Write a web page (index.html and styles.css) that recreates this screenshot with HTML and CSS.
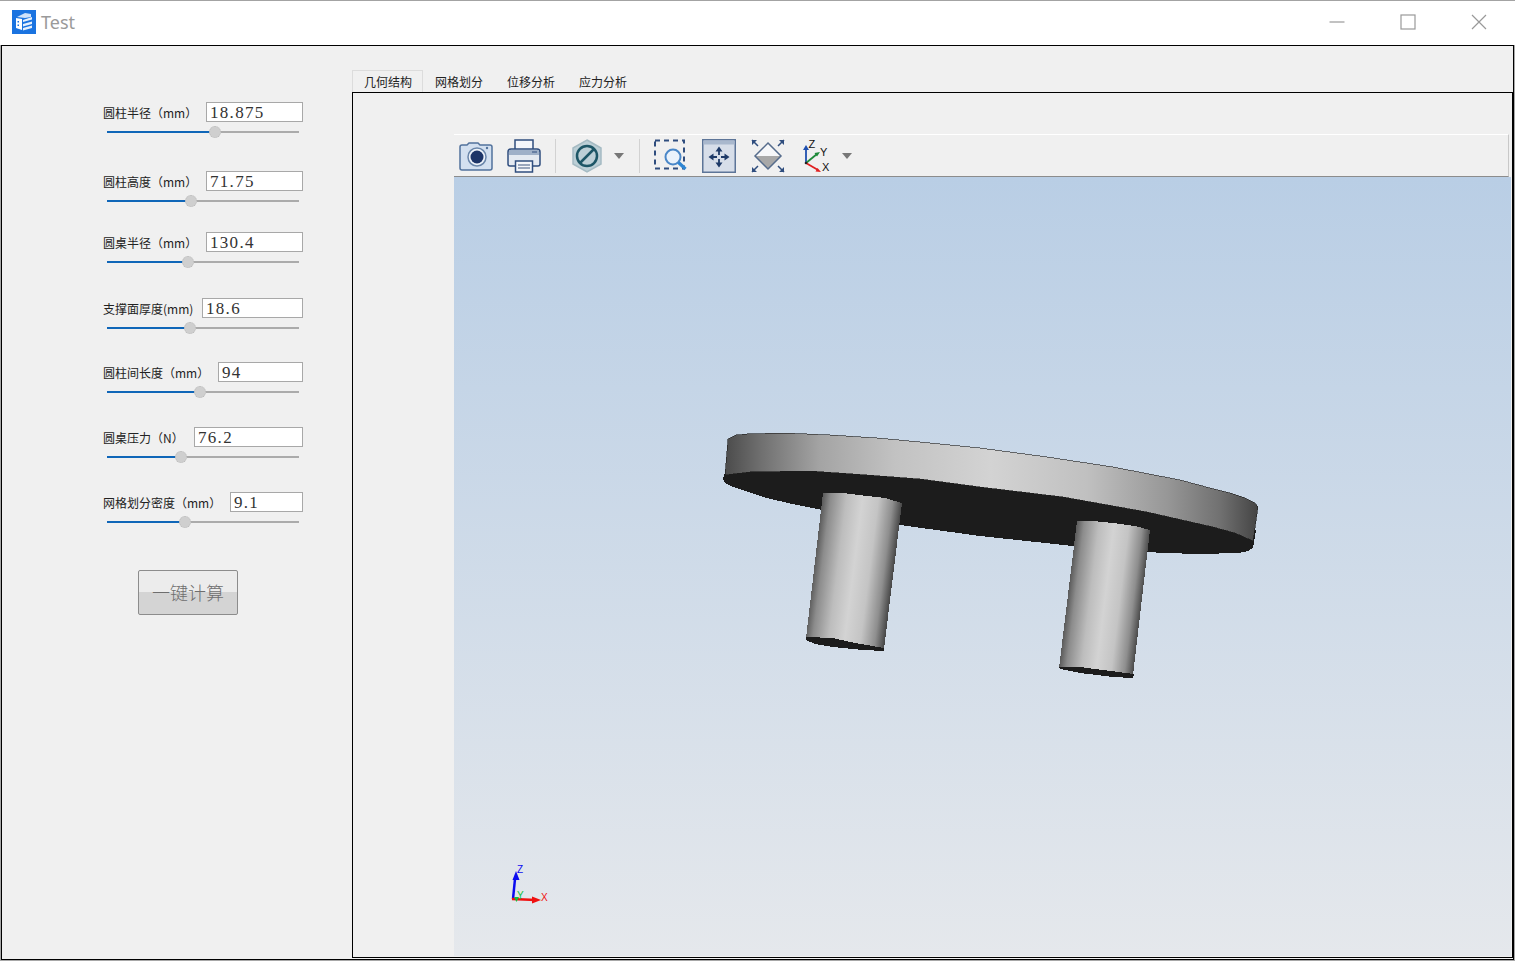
FILE: index.html
```html
<!DOCTYPE html>
<html lang="zh-CN">
<head>
<meta charset="utf-8">
<title>Test</title>
<link rel="stylesheet" href="styles.css">
</head>
<body>
<div class="app">
  <header class="titlebar">
    <svg class="app-icon" viewBox="0 0 24 24"><rect width="24" height="24" fill="#1a73e0"/><path d="M5 7l8-4 6 1v3l-6 1z" fill="#cfe2fa"/><path d="M4 8l6 1v11l-6-2z" fill="#fff"/><path d="M11 10l9-3v2.600l-9 2.400zM11 14l9-2.600v2.600l-9 2.400zM11 18l9-2.400v2.400l-9 2.400z" fill="#e6f0fc"/><path d="M5.500 11h1.500v1.500h-1.500zM5.500 14.500h1.500v1.500h-1.500z" fill="#1a73e0"/></svg>
    <span class="app-title">Test</span>
    <div class="win-controls">
      <svg class="win-btn" viewBox="0 0 16 16"><path d="M0.500 8h15" /></svg>
      <svg class="win-btn" viewBox="0 0 16 16"><rect x="1" y="1" width="14" height="14"/></svg>
      <svg class="win-btn" viewBox="0 0 16 16"><path d="M1 1l14 14M15 1L1 15"/></svg>
    </div>
  </header>

  <main class="window">
    <aside class="form">
      <section class="field">
        <div class="field-head"><label class="field-label">圆柱半径（mm）</label><div class="num w97">18.875</div></div>
        <div class="slider"><div class="slider-fill" style="width:56.300%"><span class="knob"></span></div></div>
      </section>
      <section class="field gap29">
        <div class="field-head"><label class="field-label">圆柱高度（mm）</label><div class="num w97">71.75</div></div>
        <div class="slider"><div class="slider-fill" style="width:43.700%"><span class="knob"></span></div></div>
      </section>
      <section class="field gap21">
        <div class="field-head"><label class="field-label">圆桌半径（mm）</label><div class="num w97">130.4</div></div>
        <div class="slider"><div class="slider-fill" style="width:42.200%"><span class="knob"></span></div></div>
      </section>
      <section class="field gap26">
        <div class="field-head"><label class="field-label">支撑面厚度(mm)</label><div class="num w101">18.6</div></div>
        <div class="slider"><div class="slider-fill" style="width:43.200%"><span class="knob"></span></div></div>
      </section>
      <section class="field gap24">
        <div class="field-head"><label class="field-label">圆柱间长度（mm）</label><div class="num w85">94</div></div>
        <div class="slider"><div class="slider-fill" style="width:48.400%"><span class="knob"></span></div></div>
      </section>
      <section class="field gap25">
        <div class="field-head"><label class="field-label">圆桌压力（N）</label><div class="num w109">76.2</div></div>
        <div class="slider"><div class="slider-fill" style="width:38.500%"><span class="knob"></span></div></div>
      </section>
      <section class="field gap25">
        <div class="field-head"><label class="field-label">网格划分密度（mm）</label><div class="num w73">9.1</div></div>
        <div class="slider"><div class="slider-fill" style="width:40.600%"><span class="knob"></span></div></div>
      </section>
      <button class="calc">一键计算</button>
    </aside>

    <section class="workspace">
      <nav class="tabs">
        <div class="tab active">几何结构</div>
        <div class="tab">网格划分</div>
        <div class="tab">位移分析</div>
        <div class="tab">应力分析</div>
      </nav>
      <div class="pane">
        <div class="toolbar">
          <svg class="tool" viewBox="0 0 34 34">
            <path d="M1 8q0-2 2-2h5l2-2h9l2 2h10q2 0 2 2v21q0 2-2 2H3q-2 0-2-2z" fill="#d3e0f0" stroke="#52729c" stroke-width="1.500"/>
            <circle cx="18" cy="18" r="9" fill="#eef3fa" stroke="#6a86aa" stroke-width="1.500"/>
            <circle cx="18" cy="18" r="6.500" fill="#1d3568"/>
            <circle cx="28" cy="9" r="1.200" fill="#52729c"/>
          </svg>
          <svg class="tool" viewBox="0 0 34 34">
            <rect x="8" y="1" width="18" height="11" fill="#f4f6fa" stroke="#2f4d7e" stroke-width="1.500"/>
            <path d="M1 13q0-3 3-3h26q3 0 3 3v12q0 2-2 2H3q-2 0-2-2z" fill="#e4e9f1" stroke="#2f4d7e" stroke-width="1.500"/>
            <path d="M2 11h30v5H2z" fill="#9fb0c8"/>
            <path d="M25 13h5" stroke="#2f4d7e"/>
            <rect x="8.500" y="22" width="17" height="11" fill="#f4f6fa" stroke="#2f4d7e" stroke-width="1.500"/>
            <path d="M11 26h12M11 29h12" stroke="#7b8ca8" stroke-width="1.500"/>
          </svg>
          <span class="sep"></span>
          <svg class="tool" viewBox="0 0 34 34">
            <path d="M17 1l14 8v16l-14 8-14-8V9z" fill="#bccfd6" stroke="#a5bbc3" stroke-width="1.500"/>
            <circle cx="17" cy="17" r="10" fill="none" stroke="#1d5666" stroke-width="2.500"/>
            <path d="M10 24L24 10" stroke="#1d5666" stroke-width="2.500"/>
          </svg>
          <span class="caret near"></span>
          <span class="sep after-caret"></span>
          <svg class="tool" viewBox="0 0 34 34">
            <rect x="1" y="1.500" width="29" height="28" fill="none" stroke="#2f4d7e" stroke-width="2" stroke-dasharray="5 4"/>
            <circle cx="19" cy="18" r="7.500" fill="#eaf2fb" stroke="#4a87c8" stroke-width="2"/>
            <path d="M24.500 23.500l7 6.500" stroke="#2f86d3" stroke-width="3.200"/>
          </svg>
          <svg class="tool" viewBox="0 0 34 34">
            <rect x="0.750" y="0.750" width="32.500" height="32.500" fill="#d7dee9" stroke="#5d7598" stroke-width="1.500"/>
            <rect x="1.500" y="1.500" width="31" height="4" fill="#a9b8cd"/>
            <path d="M17 12v4M17 20v4M11 18h4M19 18h4" stroke="#1e3a68" stroke-width="1.800"/>
            <path d="M17 7.500l-3.500 5h7zM17 28.500l-3.500-5h7zM6.500 18l5-3.500v7zM27.500 18l-5-3.500v7z" fill="#1e3a68"/>
          </svg>
          <svg class="tool shift" viewBox="0 0 34 34">
            <path d="M17 4l13 13H4z" fill="#f6f7f9"/>
            <path d="M4 17h26L17 30z" fill="#a8a8a8"/>
            <path d="M17 4l13 13-13 13L4 17z" fill="none" stroke="#566c8c" stroke-width="1.500"/>
            <path d="M1 1l6 6M33 1l-6 6M1 33l6-6M33 33l-6-6" stroke="#2f4d7e" stroke-width="1.500"/>
            <path d="M1 1h5L1 6zM33 1h-5l5 5zM1 33h5l-5-5zM33 33h-5l5-5z" fill="#2f4d7e"/>
          </svg>
          <svg class="tool" viewBox="0 0 34 34">
            <path d="M7 24V9" stroke="#1f4fae" stroke-width="1.800"/><path d="M7 6l-3 5h6z" fill="#1f4fae"/>
            <path d="M7 24l11-9" stroke="#1f8a3a" stroke-width="1.800"/><path d="M21 13l-5.500 1 2.500 3.500z" fill="#1f8a3a"/>
            <path d="M7 24l12 7" stroke="#e02020" stroke-width="1.800"/><path d="M22 33l-5.500-0.500 2-3.500z" fill="#e02020"/>
            <circle cx="7" cy="24" r="1.300" fill="#222"/>
            <text x="9.500" y="9" class="axis-label">Z</text>
            <text x="21" y="17" class="axis-label">Y</text>
            <text x="23" y="32" class="axis-label">X</text>
          </svg>
          <span class="caret"></span>
        </div>
        <div class="viewer">
          <svg class="scene" viewBox="454 177 1057 779">
            <defs>
              <linearGradient id="rim" gradientUnits="userSpaceOnUse" x1="724" y1="0" x2="1258" y2="0">
                <stop offset="0" stop-color="#4a4a4a"/>
                <stop offset="0.070" stop-color="#707070"/>
                <stop offset="0.180" stop-color="#a4a4a4"/>
                <stop offset="0.320" stop-color="#c2c2c2"/>
                <stop offset="0.500" stop-color="#d3d3d3"/>
                <stop offset="0.680" stop-color="#c0c0c0"/>
                <stop offset="0.830" stop-color="#979797"/>
                <stop offset="0.930" stop-color="#707070"/>
                <stop offset="1" stop-color="#444"/>
              </linearGradient>
              <linearGradient id="cyl1" gradientUnits="userSpaceOnUse" x1="814" y1="565" x2="893" y2="575">
                <stop offset="0" stop-color="#5a5a5a"/>
                <stop offset="0.100" stop-color="#8c8c8c"/>
                <stop offset="0.300" stop-color="#bdbdbd"/>
                <stop offset="0.500" stop-color="#d3d3d3"/>
                <stop offset="0.700" stop-color="#c4c4c4"/>
                <stop offset="0.880" stop-color="#8e8e8e"/>
                <stop offset="1" stop-color="#484848"/>
              </linearGradient>
              <linearGradient id="cyl2" gradientUnits="userSpaceOnUse" x1="1068" y1="594" x2="1142" y2="603">
                <stop offset="0" stop-color="#5a5a5a"/>
                <stop offset="0.100" stop-color="#8c8c8c"/>
                <stop offset="0.300" stop-color="#bdbdbd"/>
                <stop offset="0.500" stop-color="#d3d3d3"/>
                <stop offset="0.700" stop-color="#c4c4c4"/>
                <stop offset="0.880" stop-color="#8e8e8e"/>
                <stop offset="1" stop-color="#484848"/>
              </linearGradient>
            </defs>
            <polygon class="dark" points="725,472 723,479 725,483 733,487 748,492 767,498 792,504 822,510 860,518 900,525 980,536 1073,546 1120,550 1163,553 1200,554 1238,553 1248,551 1253,548 1256,530 1200,500 1000,470 800,460"/>
            <polygon class="rim" points="728,439 736,435 747,434 783,433 830,435 877,438 920,442 980,448 1047,457 1113,467 1180,480 1210,488 1230,493 1245,498 1255,503 1258,507 1255,528 1253,541 1235,533 1213,527 1147,512 1063,497 980,487 920,479 867,475 810,471 750,472 725,475"/>
            <polygon class="cyl1" points="823,493 843,493 867,496 885,498 902,503 884,649 850,643 806,638"/>
            <polygon class="dark" points="806,637 833,638 850,642 884,648 884,651 863,650 833,647 815,644 806,640"/>
            <polygon class="cyl2" points="1077,521 1093,521 1113,523 1135,526 1150,530 1133,675 1103,671 1059,668"/>
            <polygon class="dark" points="1059,667 1080,667 1103,670 1134,674 1133,678 1113,677 1097,675 1080,673 1060,669"/>
            <path class="triad-z" d="M513 899l2-20" />
            <path class="fill-z" d="M516 871l-3.500 9h7z"/>
            <path class="triad-x" d="M512 899l24 1"/>
            <path class="fill-x" d="M541 900l-9-3.500v7z"/>
            <path class="fill-y" d="M514 897l5 0-2.500 5z"/>
            <text class="t-z" x="517" y="873">Z</text>
            <text class="t-y" x="517" y="899">Y</text>
            <text class="t-x" x="541" y="901">X</text>
          </svg>
        </div>
      </div>
    </section>
  </main>
</div>
</body>
</html>
```
FILE: styles.css
```css
* { box-sizing: border-box; }
html, body { margin: 0; height: 100%; }
body { background: #a8a8a8; font-family: "Noto Sans CJK SC", "Noto Sans", sans-serif; overflow: hidden; }
.app { width: 1515px; height: 961px; display: flex; flex-direction: column; }

.titlebar { height: 45px; flex: none; background: #fff; border-top: 1px solid #a3a3a3; display: flex; align-items: center; padding: 0 0 2px 12px; }
.app-icon { width: 24px; height: 24px; }
.app-title { margin-left: 5px; font: 18px "Noto Sans", sans-serif; color: #9a9a9a; }
.win-controls { margin-left: auto; display: flex; gap: 55px; margin-right: 28px; }
.win-btn { width: 16px; height: 16px; fill: none; stroke: #999; stroke-width: 1.200; }

.window { margin-left: 1px; width: 1513px; height: 915px; flex: none; background: #f0f0f0; border: 1px solid #000; display: flex; }

.form { width: 350px; flex: none; padding: 56px 0 0 101px; }
.field { width: 200px; height: 40px; }
.gap21 { margin-top: 21px; }
.gap24 { margin-top: 24px; }
.gap25 { margin-top: 25px; }
.gap26 { margin-top: 26px; }
.gap29 { margin-top: 29px; }
.field-head { display: flex; justify-content: space-between; align-items: center; height: 20px; }
.field-label { font-size: 12px; line-height: 20px; padding-top: 2px; color: #222; white-space: nowrap; }
.num { height: 20px; border: 1px solid #a8a8a8; background: #fff; padding-left: 3px; font: 17px/20px "Liberation Serif", serif; letter-spacing: 1.300px; color: #333; }
.w97 { width: 97px; }
.w101 { width: 101px; }
.w85 { width: 85px; }
.w109 { width: 109px; }
.w73 { width: 73px; }
.slider { margin: 9px 0 0 4px; width: 192px; height: 2px; background: #ababab; }
.slider-fill { position: relative; height: 2px; background: #0f66b8; }
.knob { position: absolute; right: -6px; top: -5px; width: 12px; height: 12px; border-radius: 50%; background: #cfcfcf; border: 1px dotted #bbb; }

.calc { display: block; margin: 38px 0 0 35px; width: 100px; height: 45px; padding: 0 0 1px; border: 1px solid #8c8c8c; border-radius: 2px; background: linear-gradient(#ececec 0, #ececec 50%, #d4d4d4 50%, #d4d4d4 100%); font: 300 18px "Noto Sans CJK SC", sans-serif; color: #6e6e6e; }

.workspace { flex: none; width: 1161px; padding-top: 24px; display: flex; flex-direction: column; }
.tabs { display: flex; height: 22px; flex: none; }
.tab { width: 72px; padding-left: 11px; font-size: 12px; line-height: 24px; color: #222; white-space: nowrap; }
.tab.active { width: 71px; margin-right: 1px; border: 1px solid #dcdcdc; border-bottom: none; line-height: 22px; }
.pane { width: 1161px; height: 866px; border: 1px solid #000; padding: 41px 0 0 101px; background: #f0f0f0; }

.toolbar { width: 1055px; height: 43px; display: flex; align-items: center; gap: 14px; padding-left: 5px; border-top: 1px solid #fff; border-right: 1px solid #c8c8c8; border-bottom: 1px solid #8c8c8c; }
.tool { width: 34px; height: 34px; flex: none; }
.tool.shift { margin-left: 1px; }
.sep { width: 1px; height: 34px; background: #d2d2d2; flex: none; }
.sep.after-caret { margin-left: 1px; }
.caret { width: 0; height: 0; flex: none; border: 5px solid transparent; border-top: 6px solid #777; border-bottom: none; margin-left: -5px; }
.caret.near { margin-left: -4px; }
.axis-label { font: 11px "Liberation Sans", sans-serif; fill: #111; }

.viewer { width: 1057px; height: 779px; background: linear-gradient(#b9cee5, #e5e8ec); }
.scene { display: block; width: 1057px; height: 779px; }
.scene polygon { shape-rendering: crispEdges; }
.dark { fill: #1c1c1c; }
.rim { fill: url(#rim); stroke: #1c1c1c; stroke-width: 0.600; }
.cyl1 { fill: url(#cyl1); }
.cyl2 { fill: url(#cyl2); }
.triad-z { stroke: #0b0bf0; stroke-width: 2.500; fill: none; }
.triad-x { stroke: #f01010; stroke-width: 2.500; fill: none; }
.fill-z { fill: #0b0bf0; }
.fill-x { fill: #f01010; }
.fill-y { fill: #10c040; }
.t-z, .t-y, .t-x { font: 10px "Liberation Sans", sans-serif; }
.t-z { fill: #0b0bf0; }
.t-y { fill: #10c040; }
.t-x { fill: #f01010; }
```
